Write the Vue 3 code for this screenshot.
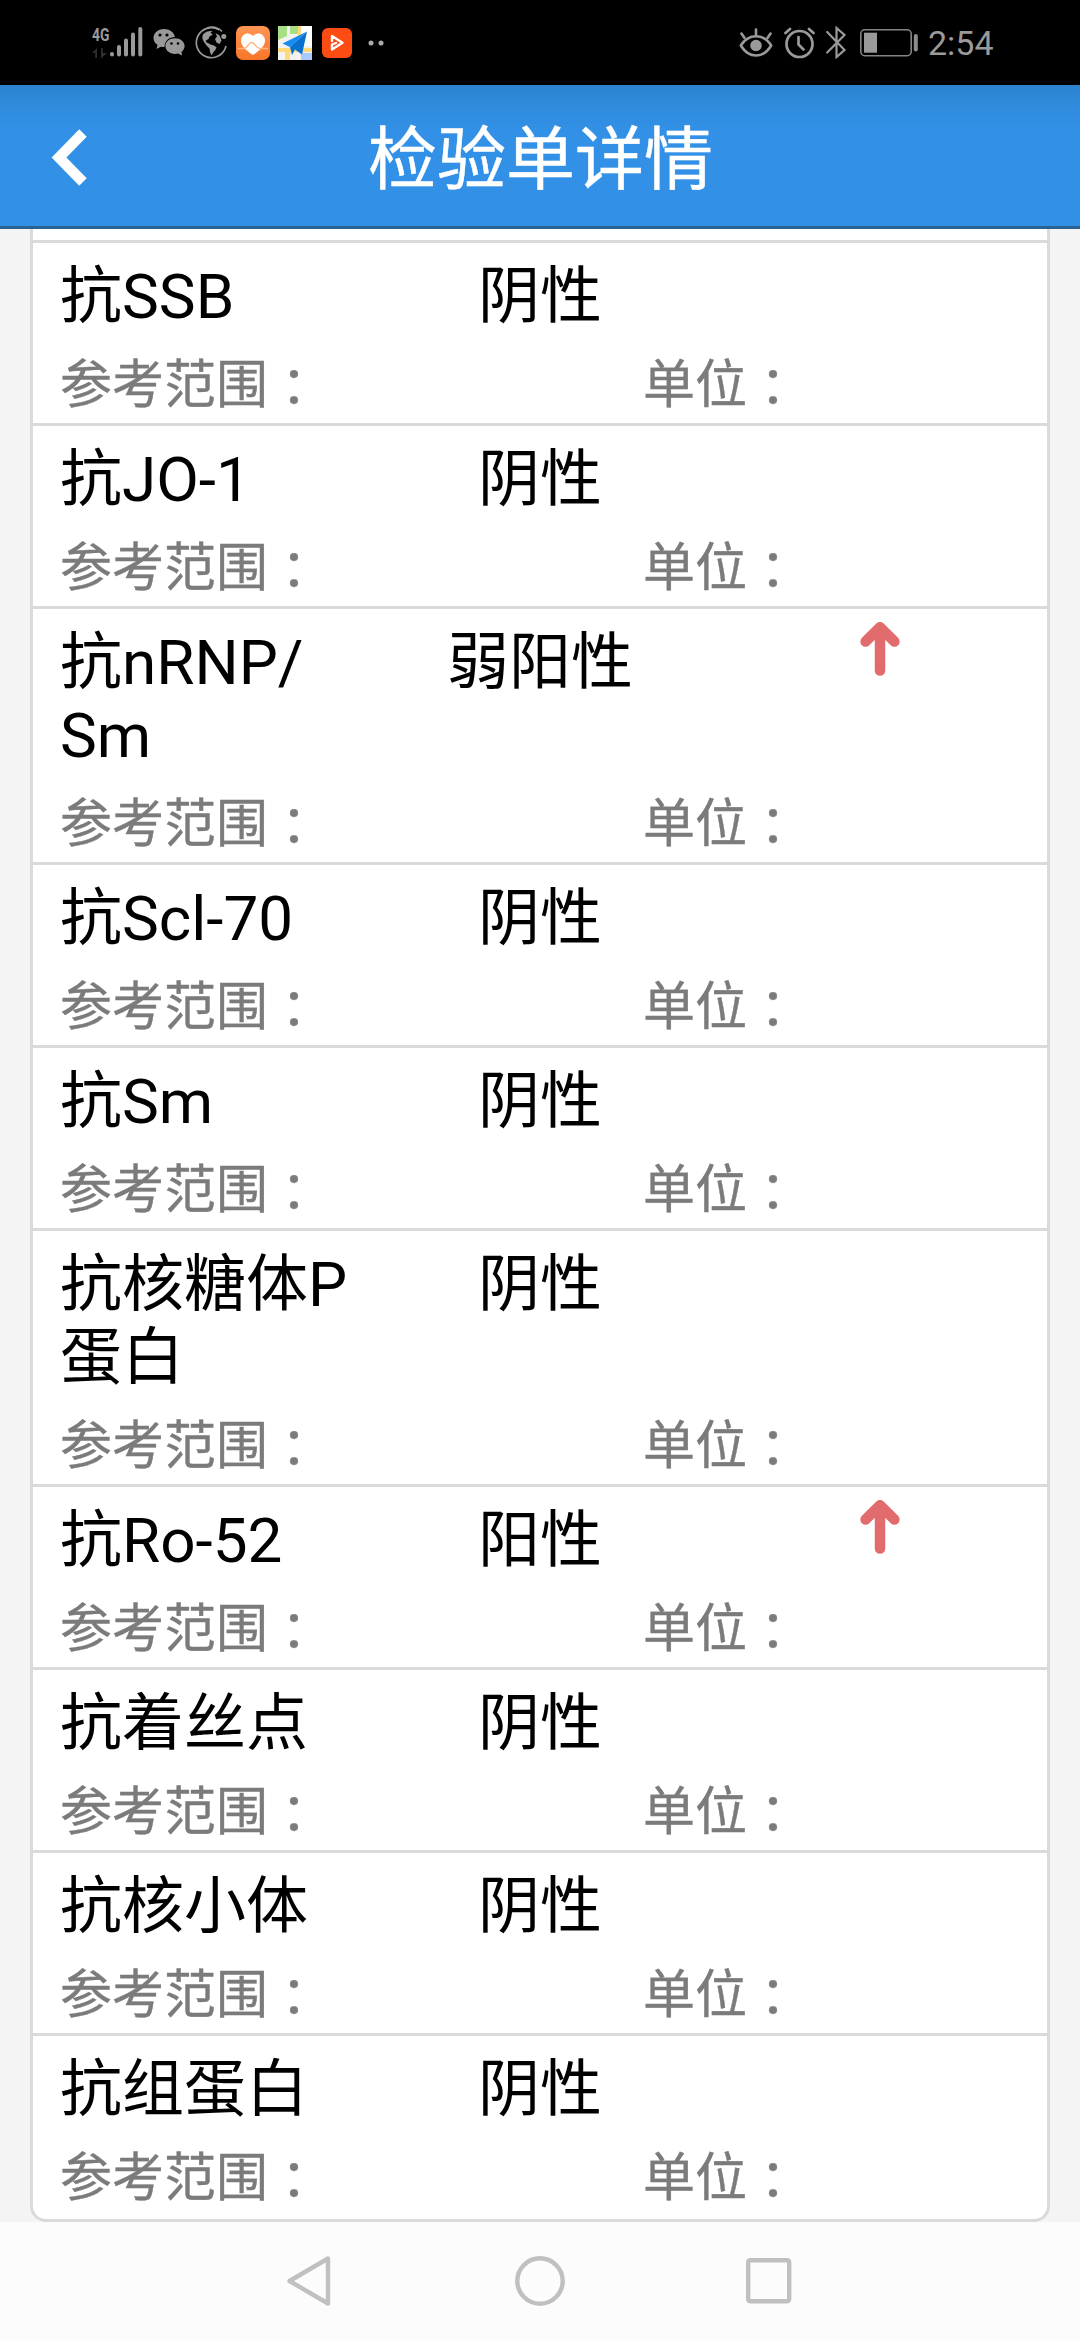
<script setup>
// The zero-width space lets a long antigen name wrap after its slash.
const rows = [
  { name: '抗SSB', value: '阴性' },
  { name: '抗JO-1', value: '阴性' },
  { name: '抗nRNP/\u200bSm', value: '弱阳性', high: true },
  { name: '抗Scl-70', value: '阴性' },
  { name: '抗Sm', value: '阴性' },
  { name: '抗核糖体P蛋白', value: '阴性' },
  { name: '抗Ro-52', value: '阳性', high: true },
  { name: '抗着丝点', value: '阴性' },
  { name: '抗核小体', value: '阴性' },
  { name: '抗组蛋白', value: '阴性' },
]
</script>

<template>
  <div class="screen">
    <div class="status">
      <div class="group left">
        <div class="net">
          <span class="gen">4G</span>
          <svg width="16" height="12" viewBox="0 0 16 12" fill="#2e2e2e">
            <path d="M0 6L5 1V11H3.2V6Z M9 1H10.8V6H15L9 11.5Z" />
          </svg>
        </div>
        <svg class="signal" width="33" height="32" viewBox="0 0 33 32" stroke="#9a9a9a" stroke-width="4" stroke-linecap="round">
          <path d="M2 28V28.6 M9 21V28.6 M16 14.500V28.6 M23 8.500V28.6 M30.300 3V28.6" />
        </svg>
        <svg class="wechat" width="32" height="28" viewBox="0 0 32 28">
          <path fill="#999" d="M11 0C5 0 .5 4 .5 9c0 3 1.500 5.200 4 6.800L3.500 20l4.300-2.300c1.400.3 2.300.4 3.700.4C11.500 12 16 8 22 8C21 3 16.500 0 11 0Z" />
          <path fill="#999" d="M22 9.200c-5.500 0-9.600 3.500-9.600 7.900S16.500 25 22 25c1 0 2-.1 3-.4l4.200 2-.8-3.500c2-1.500 3.200-3.600 3.200-6C31.600 12.700 27.300 9.200 22 9.200Z" />
          <g fill="#000"><circle cx="7" cy="6" r="1.600" /><circle cx="14" cy="6" r="1.600" /><circle cx="18.500" cy="14.500" r="1.300" /><circle cx="25" cy="14.500" r="1.300" /></g>
        </svg>
        <svg class="globe" width="34" height="34" viewBox="0 0 34 34">
          <path d="M24 3.800A15 15 0 1 0 31 20" fill="none" stroke="#999" stroke-width="1.700" />
          <path d="M12 1.900A15 15 0 0 1 27 5.500" fill="none" stroke="#999" stroke-width="1.500" />
          <circle cx="28.800" cy="10.500" r="2.500" fill="#999" />
          <path fill="#999" d="M8 8.500C10.500 5.500 14 4.500 17.500 5L15.500 6.800L17.800 8.500L14.500 10.500L13.500 13L10.800 14.500L11.500 16.500L14 17.500L15.500 18.500L19 19.500L21.500 21.500L20 24.500L18 26.500L16.500 29.500L15 26L14.500 22.500L11.500 19.500L9 16C7 13 7 10.500 8 8.500Z M20.500 7L24.500 9.500L26.500 14.500L24.500 18L21.500 16.500L20 13L22 10.500Z" />
        </svg>
        <svg class="health" width="34" height="34" viewBox="0 0 34 34">
          <defs><linearGradient id="hg" x2="0" y2="1"><stop stop-color="#ff9554" /><stop offset="1" stop-color="#f87528" /></linearGradient></defs>
          <rect width="34" height="34" rx="7" fill="url(#hg)" />
          <path fill="#fff" d="M17 10C13 5 5 7.500 5 14.500C5 21 12 25.500 17 29C22 25.500 29 21 29 14.500C29 7.500 21 5 17 10Z" />
          <path d="M2 22.500H8C12 22.500 12 16.500 15.500 16.500S20 22.500 24 22.500H32" fill="none" stroke="#ffb483" stroke-width="1.500" />
        </svg>
        <svg class="map" width="34" height="34" viewBox="0 0 34 34">
          <rect width="34" height="34" fill="#f3f2ee" />
          <path fill="#a9df84" d="M0 0H9V10L0 14Z M12 0H20V8H12Z" />
          <path fill="#fff" d="M20 0H34V20H20Z" />
          <path fill="#ffda79" d="M0 22H34V26H0Z M7 26H12V34H7Z M20 0H23V10H20Z" />
          <path fill="#a9caff" d="M23 27H34V34H23Z" />
          <path fill="#168cf0" d="M29 5.500L4.500 17.500L12 21Z" />
          <path fill="#0870cf" d="M29 5.500L12 21L14 29L17 23.500L24 28.500Z" />
        </svg>
        <svg class="play" width="30" height="30" viewBox="0 0 30 30">
          <rect width="30" height="30" rx="6" fill="#fd4b14" />
          <path d="M10 13V8L20.500 14.800L10 21.500V16.500L14 15" fill="none" stroke="#fff" stroke-width="2.400" stroke-linejoin="round" stroke-linecap="round" />
        </svg>
        <svg class="dots" width="16" height="6" viewBox="0 0 16 6" fill="#aaa"><circle cx="3" cy="3" r="2.500" /><circle cx="13" cy="3" r="2.500" /></svg>
      </div>
      <div class="group right">
        <svg class="eye" width="34" height="30" viewBox="0 0 34 30" fill="none" stroke="#9a9a9a" stroke-width="2.600" stroke-linecap="round">
          <path d="M1.800 17.500C6 11 11 8.300 17 8.300S28 11 32.200 17.500C28 24.500 23 27.500 17 27.500S6 24.500 1.800 17.500Z" stroke-linejoin="round" />
          <path d="M17 1.500V8 M2.500 5.500L5.500 10 M31.500 5.500L28.500 10" />
          <circle cx="17" cy="17.500" r="5.800" fill="#9a9a9a" stroke="none" />
        </svg>
        <svg class="alarm" width="31" height="32" viewBox="0 0 31 32" fill="none" stroke="#9a9a9a" stroke-width="2.700" stroke-linecap="round">
          <circle cx="15.500" cy="17" r="13" />
          <path d="M14.500 10V17.500L19.500 22.500" stroke-linejoin="round" /><path d="M1.500 6L6 2 M29.500 6L25 2" />
        </svg>
        <svg class="bt" width="20" height="33" viewBox="0 0 20 33" fill="none" stroke="#9a9a9a" stroke-width="2.200" stroke-linecap="round">
          <path d="M1.200 6L18.500 24L10.500 31V2L18.500 9L1.200 26.500" />
        </svg>
        <svg class="battery" width="58" height="28" viewBox="0 0 58 28">
          <rect x=".8" y=".8" width="50.400" height="25.900" rx="4" fill="none" stroke="#848484" stroke-width="1.600" />
          <rect x="4" y="3.700" width="13" height="20" fill="#9a9a9a" />
          <rect x="53.800" y="5" width="4" height="17.500" rx="2" fill="#8c8c8c" />
        </svg>
        <span class="time">2:54</span>
      </div>
    </div>

    <header class="bar">
      <svg class="back" width="37" height="59" viewBox="0 0 37 59">
        <path d="M32 5L8 29.500L32 54" fill="none" stroke="#fff" stroke-width="10.500" />
      </svg>
      <h1>检验单详情</h1>
      <span class="spacer"></span>
    </header>

    <main>
      <div class="card">
        <div class="prev"></div>
        <section v-for="r in rows" :key="r.name" class="row">
          <div class="result">
            <div class="name">{{ r.name }}</div>
            <div class="value">{{ r.value }}</div>
            <div class="flag">
              <svg v-if="r.high" width="40" height="54" viewBox="0 0 40 54">
                <path d="M5.600 19.500L20 5.200L34.400 19.500 M20 6V48.500" fill="none" stroke="#e26b6d" stroke-width="10.500" stroke-linecap="round" stroke-linejoin="round" />
              </svg>
            </div>
          </div>
          <div class="meta">
            <span class="range">参考范围<span class="colon">：</span></span>
            <span>单位<span class="colon">：</span></span>
          </div>
        </section>
      </div>
    </main>

    <nav>
      <svg width="44" height="50" viewBox="0 0 44 50"><path d="M41 2.500V47.500L2.500 25Z" /></svg>
      <svg width="50" height="50" viewBox="0 0 50 50"><circle cx="25" cy="25" r="22.700" /></svg>
      <svg width="46" height="46" viewBox="0 0 46 46"><rect x="2.200" y="2.200" width="41" height="41" rx="2" /></svg>
    </nav>
  </div>
</template>

<style>
body { margin: 0; }
</style>

<style scoped>
.screen {
  width: 1080px;
  height: 2340px;
  display: flex;
  flex-direction: column;
  overflow: hidden;
  background: #f4f4f4;
  font-family: Roboto, "Noto Sans CJK SC", sans-serif;
}
svg { display: block; flex: none; }
.status {
  height: 85px;
  flex: none;
  display: flex;
  justify-content: space-between;
  background: #000;
  color: #9a9a9a;
}
.group { display: flex; align-items: center; height: 86px; }
.left { padding-left: 92px; }
.net { width: 18px; height: 32px; display: flex; flex-direction: column; justify-content: space-between; }
.gen {
  display: block;
  font-size: 19px;
  line-height: 16px;
  font-weight: 700;
  transform: scaleX(.73);
  transform-origin: left;
}
.signal { margin-top: -2px; }
.wechat { margin-left: 10px; }
.globe { margin-left: 10px; }
.health { margin-left: 7px; }
.map { margin-left: 8px; }
.play { margin-left: 10px; }
.dots { margin-left: 16px; }
.right { padding-right: 86px; }
.alarm { margin-left: 11px; margin-top: -1px; }
.bt { margin-left: 11px; margin-top: -1px; }
.battery { margin-left: 14px; margin-top: -1px; }
.time { margin-left: 10px; width: 66px; font-size: 34px; line-height: 40px; }

.bar {
  height: 141px;
  flex: none;
  display: flex;
  align-items: center;
  justify-content: space-between;
  background: linear-gradient(#2c82cf 0, #2f8bdc 20px, #3290e6 45px);
  border-bottom: 3px solid #2a6294;
}
.back { margin: 4px 0 0 51px; }
.spacer { width: 87px; }
h1 {
  margin: 11px 0 0;
  color: #fff;
  font-size: 69px;
  font-weight: 400;
  line-height: 80px;
  -webkit-text-stroke: .5px currentColor;
}

main {
  height: 1993px;
  flex: none;
  padding: 0 30px;
  overflow: hidden;
}
.card {
  height: 1990px;
  background: #fff;
  border: solid #dadada;
  border-width: 0 3px 3px;
  border-radius: 0 0 16px 16px;
}
.prev { height: 11px; }
.row {
  border-top: 3px solid #dadada;
  padding: 17px 27px 7px;
}
.result {
  display: grid;
  grid-template-columns: 320px 320px 320px;
  font-size: 62px;
  line-height: 73px;
  color: #000;
}
.name { padding-right: 16px; }
.value { text-align: center; }
.flag { padding-left: 160px; }
.flag svg { margin-top: -4px; }
.meta {
  display: flex;
  margin-top: 23px;
  font-size: 52px;
  line-height: 60px;
  color: #7b7b7b;
  font-family: Roboto, "Noto Sans CJK TC", sans-serif;
  -webkit-text-stroke: .4px currentColor;
}
.range { width: 583px; }
.colon { line-height: 0; vertical-align: -4px; }

nav {
  height: 118px;
  flex: none;
  display: flex;
  align-items: center;
  gap: 184px;
  padding-left: 287px;
  box-sizing: border-box;
  background: #fcfcfc;
}
nav svg { fill: none; stroke: #c0c0c0; stroke-width: 4.400; stroke-linejoin: round; }
nav svg:last-child { margin-left: -3px; }
</style>
